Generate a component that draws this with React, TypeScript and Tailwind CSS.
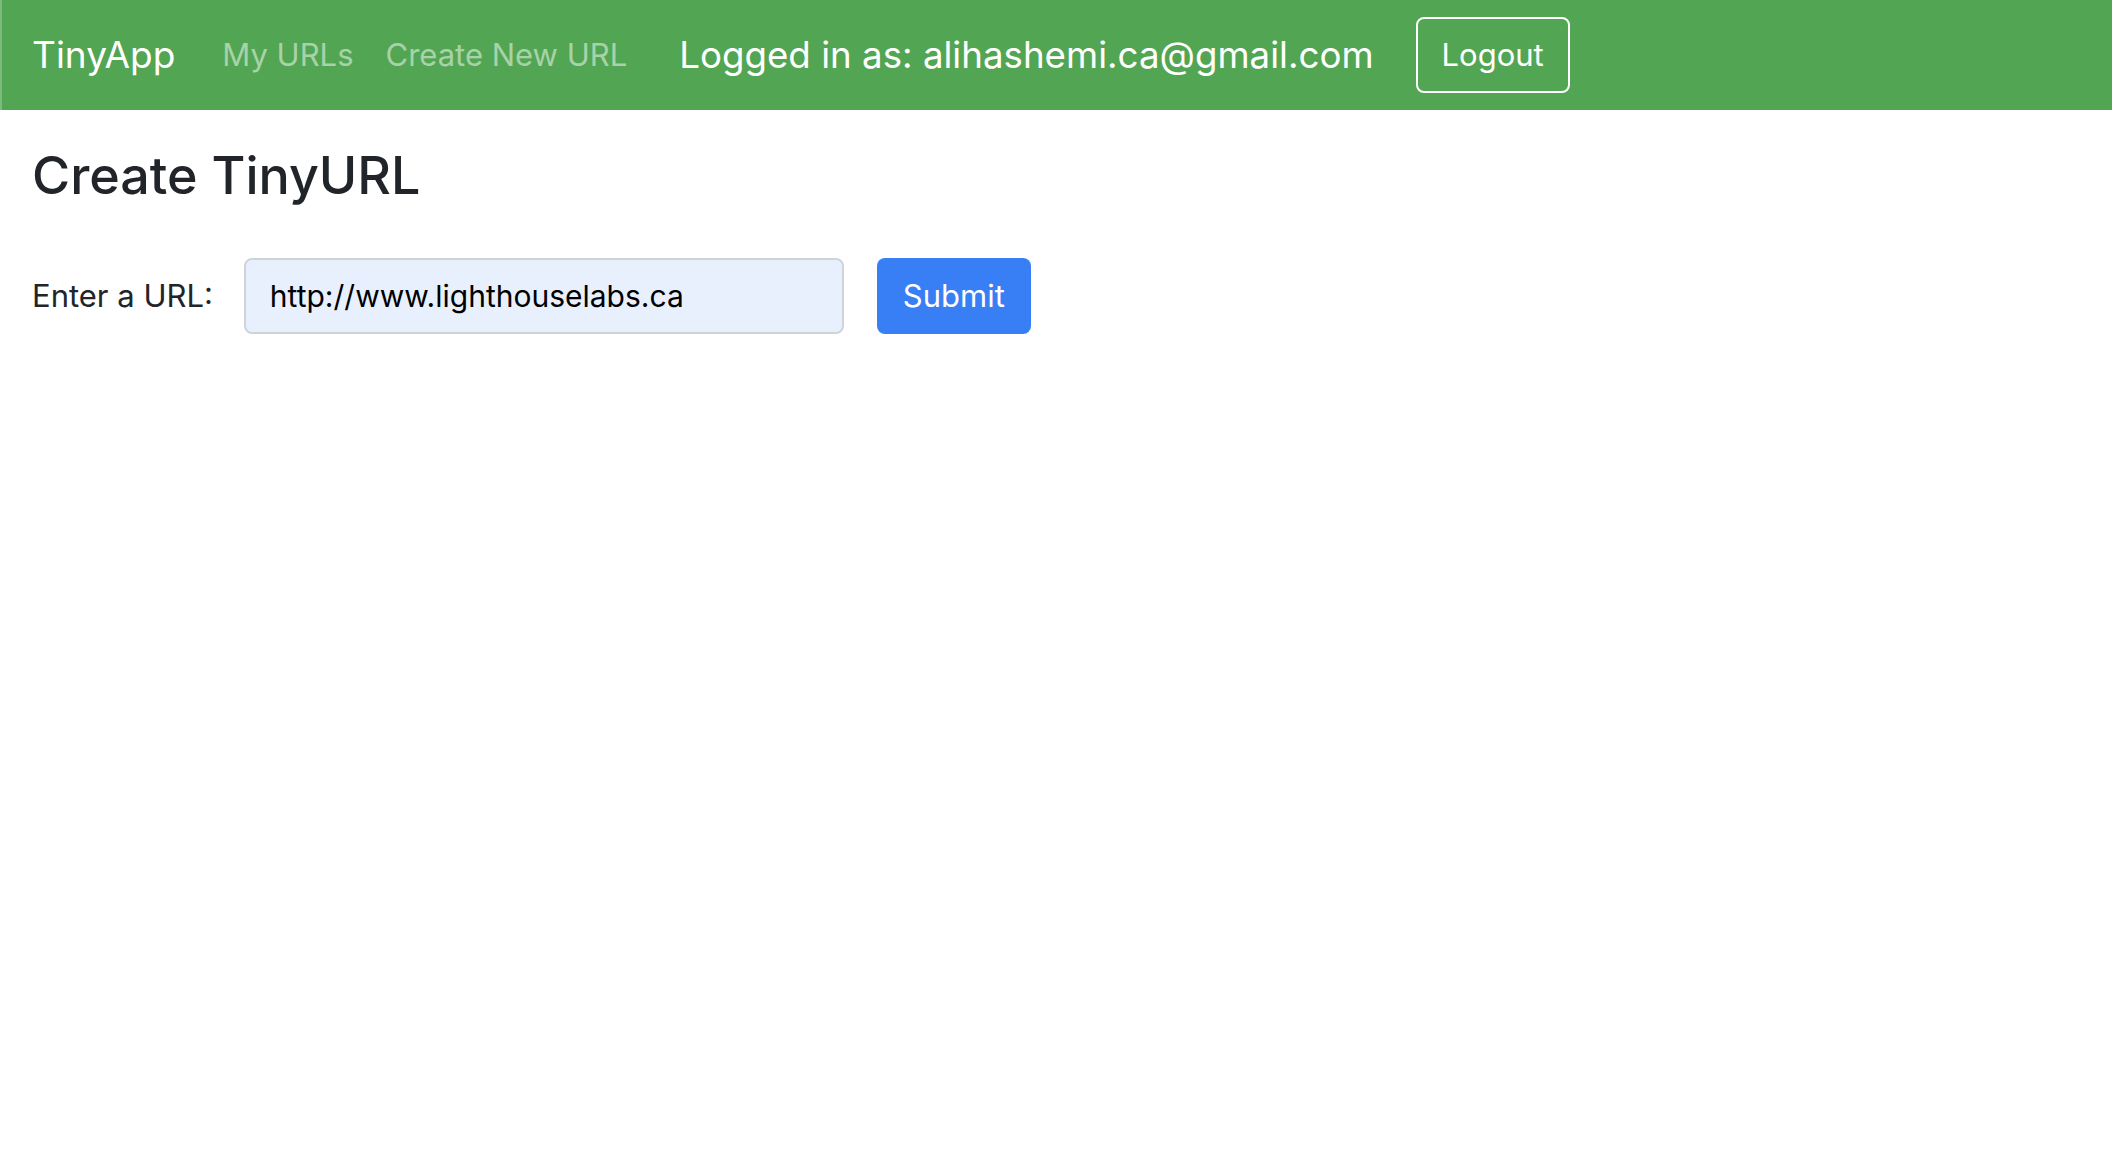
import React from "react";

const App = () => {
  return (
    <div className="min-h-screen bg-white font-['Inter',sans-serif] text-[#212529]">
      {/* Navbar */}
      <nav className="flex h-[110px] items-center border-l-2 border-[#7dbb7d] bg-[#52a552] pl-[30px]">
        <span className="mr-[47px] text-[37px] text-white">TinyApp</span>
        <a className="pr-8 text-[31px] text-white/50">My URLs</a>
        <a className="text-[31px] text-white/50">Create New URL</a>
        <span className="ml-[52px] mr-[42px] text-[36.7px] text-white">
          Logged in as: alihashemi.ca@gmail.com
        </span>
        <button className="h-[76px] w-[154px] rounded-lg border-2 border-white text-[31px] text-white">
          Logout
        </button>
      </nav>

      <main className="px-8 pt-[35px]">
        <h1 className="text-[52px] font-medium leading-[1.2]">Create TinyURL</h1>
        <form className="mt-[51px] flex items-center">
          <label className="text-[31px]">Enter a URL:</label>
          <input
            type="text"
            defaultValue="http://www.lighthouselabs.ca"
            className="ml-[31px] h-[76px] w-[600px] rounded-lg border-2 border-[#ced4da] bg-[#e8f0fe] px-6 text-[30px] text-black outline-none"
          />
          <button
            type="button"
            className="ml-[33px] h-[76px] w-[154px] rounded-lg bg-[#387ef5] text-[31px] text-white"
          >
            Submit
          </button>
        </form>
      </main>
    </div>
  );
};

export default App;
